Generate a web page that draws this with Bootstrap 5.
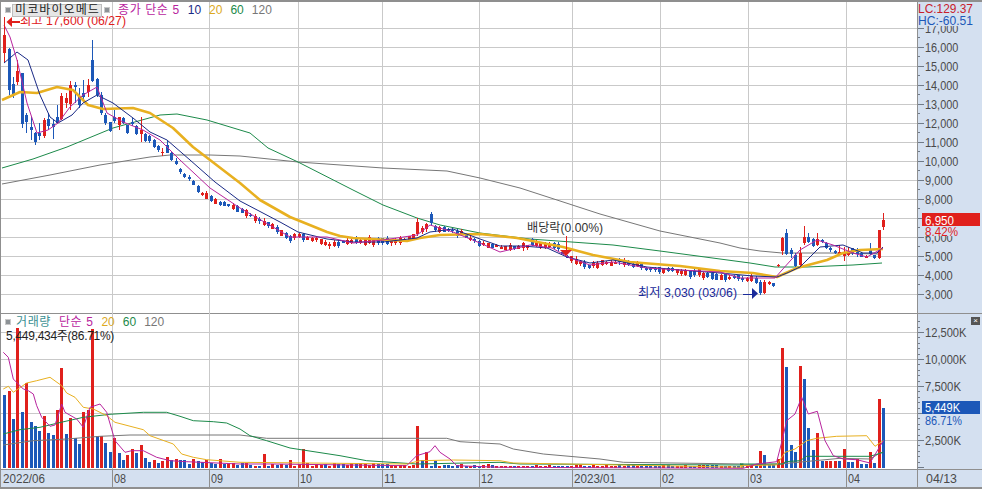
<!doctype html>
<html lang="ko"><head><meta charset="utf-8"><title>미코바이오메드 차트</title>
<link href="https://cdn.jsdelivr.net/npm/bootstrap@5.3.0/dist/css/bootstrap.min.css" rel="stylesheet">
<style>
html,body{margin:0;background:#fff;overflow:hidden}
body{font-family:"Liberation Sans","Noto Sans CJK KR",sans-serif;font-size:12px;line-height:14px}
.chart-frame{width:982px;height:489px;border-left:1px solid #8f8f8f;border-top:2px solid #8f8f8f;border-bottom:2px solid #8f8f8f}
.pane-main{height:312px;border-bottom:1px solid #8f8f8f}
.pane-vol{height:155px}
.pane-date{height:18px;border-top:1px solid #8f8f8f}
.plot-area{width:916px;height:100%}
.plot-date{background:#d4e0f0}
.axis-area{width:65px;height:100%;background:#d4e0f0;border-left:1px solid #8f8f8f}
.plot-area svg,.axis-area svg{display:block}
.legend-layer{left:4px;top:1px;white-space:nowrap}
.legend-vol{left:4px;top:1px;white-space:nowrap}
.legend-head{gap:1px}
.sq-mark{width:6px;height:6px;background:#8d9296;border:1px solid #c9c9c9}
.sq-gap{margin-left:1px}
.name-box{background:#e6e6e6;border:1px solid #bdbdbd;color:#222;height:13px;line-height:11px;padding:0 2px;width:90px;letter-spacing:1.1px}
.ko-wide{letter-spacing:.6px}
.c-ma5{color:#b8249e}.c-ma10{color:#1a2a86}.c-ma20{color:#dca91e}.c-ma60{color:#1c8a4a}.c-ma120{color:#777}.c-vol{color:#3b8f92;margin-left:-3px}
.vol-readout{color:#222;letter-spacing:-.28px;padding-left:1px}
.close-mark{right:2px;top:3px;width:9px;height:8px;background:#555;color:#fff;font-size:8px;line-height:7px;text-align:center}
</style></head>
<body>
<div class="chart-frame d-flex flex-column">
  <div class="pane-main d-flex">
    <div class="plot-area position-relative">
      <svg id="sMain" width="916" height="312" viewBox="1 2 916 312"></svg>
      <div class="legend-layer position-absolute d-flex align-items-center gap-2">
        <div class="d-flex align-items-center legend-head"><span class="sq-mark"></span><span class="name-box">미코바이오메드</span><span class="sq-mark sq-gap"></span></div>
        <span class="c-ma5 ko-wide">종가 단순 5</span><span class="c-ma10">10</span><span class="c-ma20">20</span><span class="c-ma60">60</span><span class="c-ma120">120</span>
      </div>
    </div>
    <div class="axis-area"><svg id="aMain" width="64" height="312" viewBox="918 2 64 312"></svg></div>
  </div>
  <div class="pane-vol d-flex">
    <div class="plot-area position-relative">
      <svg id="sVol" width="916" height="155" viewBox="1 315 916 155"></svg>
      <div class="legend-vol position-absolute">
        <div class="d-flex align-items-center gap-2"><span class="sq-mark"></span><span class="c-vol ko-wide">거래량</span><span class="c-ma5 ko-wide">단순 5</span><span class="c-ma20">20</span><span class="c-ma60">60</span><span class="c-ma120">120</span></div>
        <div class="vol-readout">5,449,434주(86.71%)</div>
      </div>
    </div>
    <div class="axis-area position-relative"><svg id="aVol" width="64" height="155" viewBox="918 315 64 155"></svg><span class="close-mark position-absolute">×</span></div>
  </div>
  <div class="pane-date d-flex">
    <div class="plot-area plot-date"><svg id="sDate" width="916" height="17" viewBox="1 470 916 17"></svg></div>
    <div class="axis-area"><svg id="aDate" width="64" height="17" viewBox="918 470 64 17"></svg></div>
  </div>
</div>
<script>
const RED='#e0201c',BLUE='#1c58b8',GRID='#c9c9c9',AXT='#4a4a4a';
const X=i=>4.3+4.394*i;
const Z=(ox,oy,p)=>p.map(a=>[ox+a[0]/3,oy+a[1]/3]);
const line=(pts,c,w)=>`<polyline fill="none" stroke="${c}" stroke-width="${w}" stroke-linejoin="round" points="${pts.map(p=>p[0].toFixed(1)+','+p[1].toFixed(1)).join(' ')}"/>`;
const R=(x,y,w,h,c)=>`<rect x="${x}" y="${y}" width="${w}" height="${h}" fill="${c}" shape-rendering="crispEdges"/>`;
const T=(x,y,s,c,w,fs)=>`<text x="${x}" y="${y}" fill="${c}" font-size="${fs||13}" font-family="Liberation Sans,Noto Sans CJK KR,sans-serif"${w?` textLength="${w}" lengthAdjust="spacingAndGlyphs"`:''}>${s}</text>`;
const VG=[112,209,298,382,479,572,660,748,846];
let seed=12345;const rnd=()=>(seed=(seed*1103515245+12345)&0x7fffffff)/0x7fffffff;
const head=[[1,50,105,160,190],[0,145,148,270,285],[0,232,252,285,295],[1,180,212,245,255],[0,218,220,372,385],[0,340,345,365,400],[0,350,380,390,420],[0,395,398,425,435],[0,370,400,408,420],[1,355,360,408,415],[0,340,358,378,390],[0,360,372,380,418],[0,315,350,370,372],[1,280,288,358,360],[1,280,295,310,325],[1,243,255,312,330],[0,245,255,262,310],[0,265,292,315,325],[0,240,280,290,300],[1,238,255,275,290],[0,120,180,243,245],[0,235,238,285,290],[0,275,285,340,345],[0,338,345,370,375],[0,365,365,392,395],[0,330,352,362,368],[1,350,352,375,390],[0,352,355,368,372],[0,375,375,398,403],[0,355,365,373,378],[0,375,377,402,405],[1,350,390,402,425],[0,400,402,422,425],[0,405,408,422,428],[0,418,420,440,443],[0,435,437,450,455],[1,445,457,460,468],[0,422,435,458,460],[0,455,458,480,482]].map(a=>[a[0],a[1]/3,a[2]/3,a[3]/3,a[4]/3]);
const tail=[[0,240,245,278,285],[1,240,245,278,282],[1,243,245,252,255],[0,248,250,257,260],[1,193,195,198,200],[1,112,115,152,165],[0,88,100,162,165],[0,145,150,162,175],[0,160,165,198,200],[1,140,160,195,200],[1,78,110,130,135],[0,100,112,125,130],[0,115,118,138,140],[1,100,118,135,137],[0,118,120,126,128],[0,125,128,145,148],[0,140,143,150,155],[0,150,153,160,162],[1,135,155,163,165],[1,140,158,168,182],[1,140,153,165,168],[0,143,145,160,165],[0,145,155,162,170],[0,155,158,170,172],[1,165,167,173,175],[0,128,150,162,165],[0,165,165,175,178],[1,90,90,175,178],[1,40,60,80,90]].map(a=>[a[0],200+a[1]/3,200+a[2]/3,200+a[3]/3,200+a[4]/3]);
const path=[[171,153],[180,170],[190,180],[200,192],[210,198],[220,203],[240,210],[250,215],[262,222],[272,227],[280,232],[290,238],[298,236],[310,238],[320,241],[327,243],[335,245],[345,242],[360,240],[383,242],[400,240],[410,238],[414,236],[440,228],[450,232],[460,232],[470,238],[480,243],[500,247],[520,248],[532,244],[548,245],[560,247],[565,256],[575,262],[590,266],[600,264],[620,262],[640,267],[660,269],[700,274],[720,276],[740,278],[757,279]];
const cy=x=>{for(let k=1;k<path.length;k++)if(x<=path[k][0]){const a=path[k-1],b=path[k];return a[1]+(b[1]-a[1])*(x-a[0])/(b[0]-a[0])}return 279};
const candles=[...head];
for(let i=39;i<172;i++){const x=X(i),c=cy(x)+(rnd()-.5)*3,h=1.5+rnd()*4.5,col=rnd()<.5?1:0;
  candles.push([col,c-h/2-rnd()*2.5,c-h/2,c+h/2,c+h/2+rnd()*2.5]);}
candles.push(...tail);
const set=(x,v)=>{candles[Math.round((x-4.3)/4.394)]=v};
set(419,[1,218,222,234,236]);set(423,[1,226,228,232,234]);set(428,[1,223,224,229,232]);set(432.5,[0,212,214,223,225]);
set(436,[0,225,226,230,232]);set(531,[0,238,239,245,246]);set(510,[1,243,245,250,251]);
let cs='';
candles.forEach((d,i)=>{const x=Math.round(X(i)),c=d[0]?RED:BLUE;
  cs+=R(x,d[1],1,d[4]-d[1],c)+R(x-1,d[2],3,Math.max(1,d[3]-d[2]),c)});
let m='';
for(let v=3;v<=17;v++)m+=R(1,Math.round(294-(v-3)*19.02),916,1,GRID);
VG.forEach(x=>m+=R(x,2,1,312,GRID));
const gray=[[2,184],[50,175],[100,165],[150,157],[170,155],[210,155],[240,156],[298,162],[383,168],[447,171],[480,178],[520,188],[557,200],[600,214],[660,231],[720,243],[740,248],[760,251],[782,253],[830,253],[880,254]];
const green=[[2,168],[33,159],[67,147],[113,128],[160,115],[177,114],[207,120],[240,130],[250,133],[268,148],[298,162],[353,190],[383,205],[417,218],[440,225],[480,233],[530,239],[613,245],[660,251],[720,259],[750,263],[775,267],[807,267],[853,265],[882,263]];
const yellow=[[2,100],[20,92],[37,93],[57,87],[73,90],[88,105],[103,109],[133,108],[150,113],[173,128],[193,147],[210,160],[240,183],[260,200],[290,217],[327,232],[340,236],[353,238],[407,241],[420,238],[440,235],[480,234],[517,238],[563,247],[593,255],[630,262],[680,266],[720,271],[753,273],[777,277],[797,268],[827,260],[843,253],[860,250],[883,249]];
const navy=[[4,63],[17,52],[28,60],[40,95],[50,117],[58,123],[72,115],[83,103],[97,95],[113,103],[133,118],[150,132],[167,140],[190,160],[215,182],[240,201],[280,222],[298,232],[327,239],[353,242],[383,242],[417,238],[430,232],[453,229],[480,239],[500,246],[523,246],[547,248],[567,257],[590,263],[613,260],[647,267],[680,270],[720,273],[753,276],[777,277],[787,273],[800,267],[820,247],[843,245],[863,253],[877,253],[883,247]];
const mag=[[4,25],[10,37],[17,60],[27,103],[37,133],[48,130],[58,123],[70,107],[83,95],[97,87],[107,113],[123,122],[143,130],[160,140],[180,160],[210,188],[240,208],[273,227],[290,237],[327,237],[353,243],[383,240],[417,235],[430,225],[453,232],[480,243],[500,252],[530,245],[552,248],[570,258],[590,265],[613,262],[647,268],[680,270],[720,272],[740,278],[775,278],[782,270],[800,250],[817,240],[833,245],[853,253],[867,257],[883,248]];
m+=line(gray,'#777',1)+line(green,'#1c8a4a',1)+cs+line(yellow,'#e8b020',2.6)+line(navy,'#1a2a86',1)+line(mag,'#b8249e',1);
m+=R(4,17,1,12,RED)+`<polygon points="6.5,22 12,17 12,27" fill="${RED}"/>`+R(12,21,8,1.5,RED)+T(20,25,'최고 17,600 (06/27)',RED,106,12.5);
m+=T(527,232,'배당락(0.00%)','#333',76,12.5)+R(566,236,1,15,RED)+`<polygon points="560,250 572,250 566,256" fill="${RED}"/>`;
m+=T(638,296.5,'최저 3,030 (03/06)','#1a2a9a',99,12.5)+R(743,294,9,1,'#1a2a9a')+`<polygon points="752,288 752,299 758,293.5" fill="#1a2a9a"/>`;
sMain.innerHTML=m;
let a='';
for(let v=3;v<=17.5;v+=.5){const y=Math.round(294-(v-3)*19.02);a+=R(918,y,v%1?2:6,1,'#6f7a88')}
for(let v=3;v<=17;v++){const y=294-(v-3)*19.02,l=v+',000';a+=T(925,y+5,l,AXT,l.length*5.55,13)}
a+=R(922,226,58,10,'#d4e0f0')+R(922,213,58,13,RED)+T(925,224.5,'6,950','#fff',29,13)+T(925,236,'8.42%',RED,33,13);
a+=R(918,2,64,24,'#d4e0f0')+T(918,13,'LC:129.37','#c8202c',55,13)+T(918,25,'HC:-60.51','#1c58b8',55,13);
aMain.innerHTML=a;
let v='';
[333,360,387,414,441].forEach(y=>v+=R(1,y,916,1,GRID));
VG.forEach(x=>v+=R(x,315,1,155,GRID));
const vh=[[0,258],[1,245],[0,330],[1,57],[0,308],[1,222],[0,338],[0,350],[0,365],[1,322],[0,372],[0,378],[1,302],[1,177],[0,375],[1,326],[0,388],[0,405],[1,308],[1,303],[1,60],[0,382],[1,380],[0,402],[0,428],[1,388],[0,432],[0,452],[1,438],[1,420],[0,432],[1,408],[0,447],[0,458],[1,452],[0,462],[1,455],[1,444],[0,452],[1,450],[0,453],[0,453],[0,464],[1,450],[0,457],[0,459],[1,452],[0,462],[0,464],[1,450],[0,464],[1,462],[1,462],[0,468]];
const vt=[[1,425],[0,438],[0,468],[0,468],[1,450],[1,117],[0,174],[0,408],[0,428],[1,171],[0,210],[0,357],[0,423],[1,372],[0,455],[1,455],[1,455],[1,455],[0,455],[1,420],[0,458],[0,458],[1,450],[0,465],[0,465],[1,430],[0,462],[1,270],[0,297]];
const vols=[];for(let i=0;i<201;i++){let col,top;
  if(i<vh.length){col=vh[i][0];top=310+vh[i][1]/3}
  else if(i>=172){col=vt[i-172][0];top=310+vt[i-172][1]/3}
  else{col=candles[i][0];const x=X(i);const mx=x<380?3.5:x<500?3:1.6;top=469-(1.5+rnd()*mx)}
  vols.push([col,top])}
const sv=(x,t,c)=>vols[Math.round((x-4.3)/4.394)]=[c,t];
sv(264,455,1);sv(304,450,1);sv(292,461,1);sv(419,427,1);sv(433,427,1);sv(428,453,1);sv(423.5,461,0);sv(437,462,0);sv(580,466,1);sv(326,465,0);
vols.forEach((d,i)=>{const x=Math.round(X(i))-1;v+=R(x,d[1],3,469-d[1],d[0]?RED:BLUE)});
const vgray=[...Z(0,310,[[10,408],[100,395],[200,390],[300,382],[390,378],[720,378]]),...Z(240,400,[[80,118],[620,118],[660,128],[780,135]]),...Z(500,400,[[40,150],[130,165],[300,180],[370,190],[730,195]]),...Z(740,310,[[0,468],[120,465],[300,448],[390,450],[420,432],[430,430]])];
const vgreen=[...Z(0,310,[[10,375],[60,362],[120,355],[170,343],[250,325],[330,316],[430,310],[500,310],[540,322],[580,335],[640,338],[680,342],[720,360]]),...Z(240,400,[[30,110],[80,125],[150,147],[300,170],[380,185],[530,195],[780,190]]),...Z(500,400,[[60,195],[730,198]]),...Z(740,310,[[0,465],[130,465],[135,458],[180,455],[200,442],[390,442],[430,430]])];
const vyel=[...Z(0,310,[[10,240],[25,232],[40,250],[80,222],[110,215],[150,205],[185,230],[200,252],[225,265],[250,295],[280,300],[320,320],[345,340],[430,362],[450,380],[520,405],[545,435],[580,445],[620,452],[720,460]]),...Z(240,400,[[0,190],[500,195],[540,185],[640,183],[780,185]]),...Z(500,400,[[40,192],[730,205]]),...Z(740,310,[[0,470],[110,468],[135,430],[165,420],[200,395],[230,388],[290,382],[380,380],[405,412],[430,395]])];
const vmag=[...Z(0,310,[[10,130],[25,145],[40,210],[55,225],[70,240],[85,245],[100,255],[110,290],[125,325],[150,352],[165,348],[185,285],[195,310],[230,330],[250,355],[270,295],[300,285],[320,310],[345,395],[375,430],[395,425],[430,425],[470,445],[510,455],[560,458],[720,465]]),...Z(240,400,[[100,195],[500,200],[530,170],[570,158],[585,140],[600,160],[630,180],[650,200],[780,205]]),...Z(500,400,[[730,208]]),...Z(740,310,[[50,465],[110,458],[125,400],[140,335],[165,315],[185,265],[205,315],[232,307],[255,395],[280,440],[310,450],[350,452],[390,462],[430,395]])];
v+=line(vgray,'#777',1)+line(vgreen,'#1c8a4a',1)+line(vyel,'#e8b020',1)+line(vmag,'#b8249e',1);
sVol.innerHTML=v;
let av='';
for(let y=468,i=0;y>=318;y-=5.4,i++){const yy=Math.round(y);av+=R(918,yy,i%5?2:6,1,'#6f7a88')}
[['12,500K',333,41.5],['10,000K',360,41.5],['7,500K',387,36],['2,500K',441,36]].forEach(l=>{av+=T(925,l[1]+4.5,l[0],AXT,l[2],13)});
av+=R(922,402,58,13,BLUE)+T(925,413,'5,449K','#fff',35,13)+T(925,425.5,'86.71%',BLUE,37,13);
aVol.innerHTML=av;
let dt='';
[[112,'08'],[209,'09'],[298,'10'],[382,'11'],[479,'12'],[572,'2023/01'],[660,'02'],[748,'03'],[846,'04']].forEach(d=>{dt+=R(d[0],470,1,17,'#8f8f8f')+T(d[0]+2,483,d[1],AXT,d[1].length>2?42:12,13)});
dt+=T(3,483,'2022/06',AXT,42,13);
sDate.innerHTML=dt;
aDate.innerHTML=T(926,483,'04/13',AXT,31,13);
</script>
<script src="https://cdn.jsdelivr.net/npm/bootstrap@5.3.0/dist/js/bootstrap.bundle.min.js"></script>
</body></html>
